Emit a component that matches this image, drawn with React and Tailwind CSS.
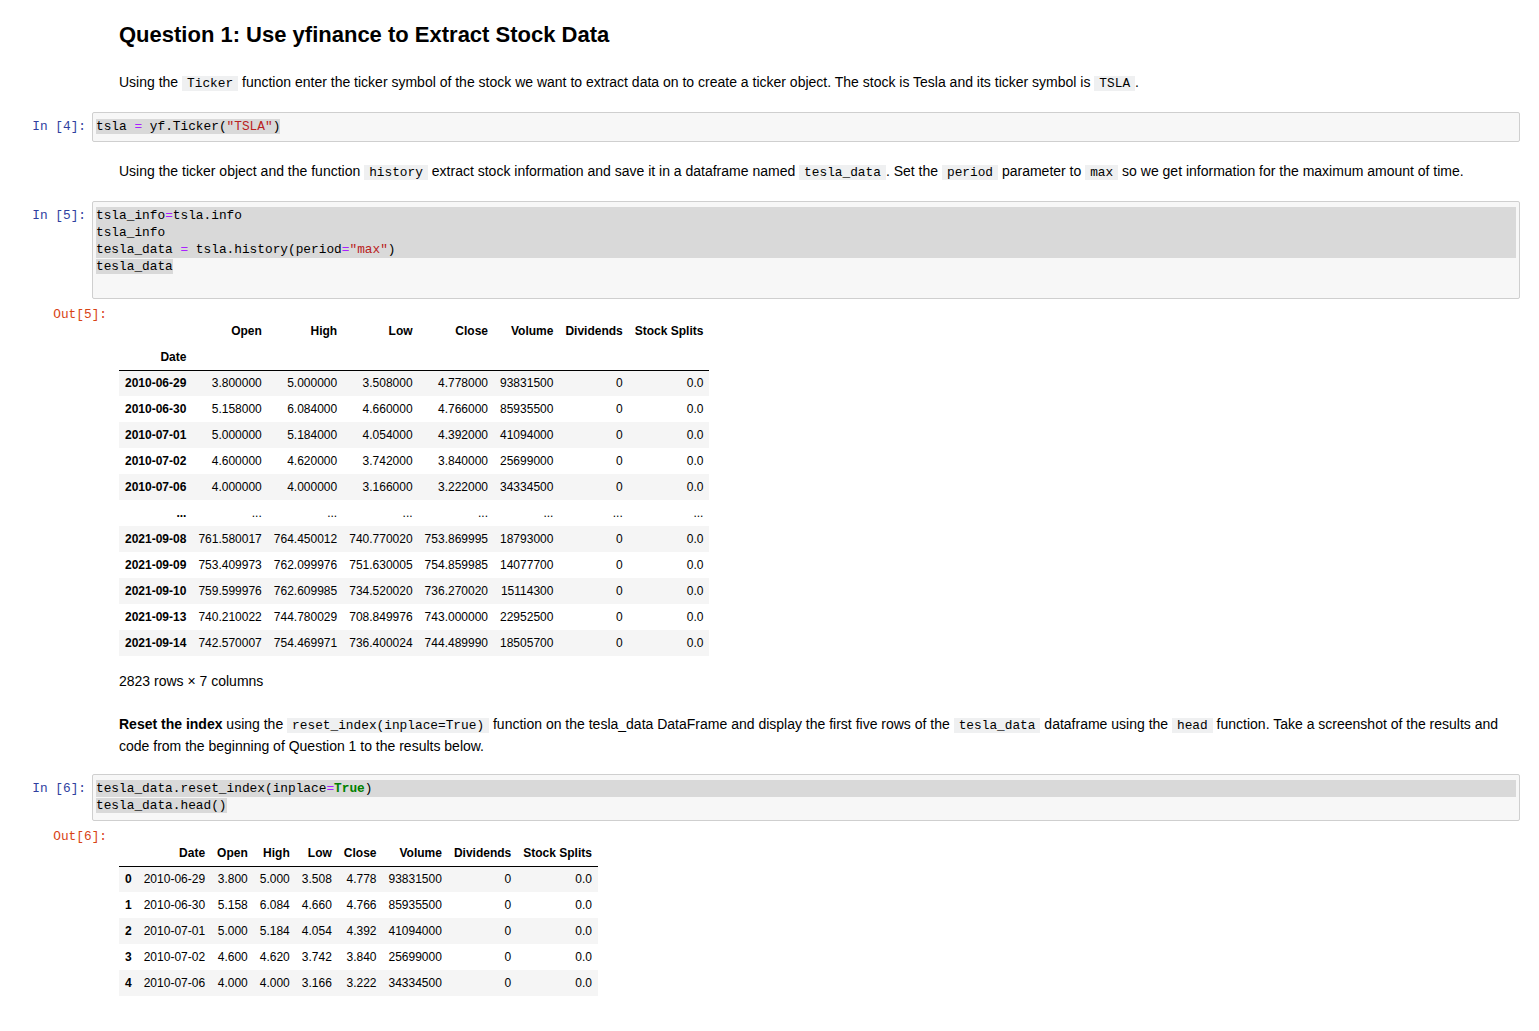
import React from 'react'

const mono = "font-['Liberation_Mono',monospace] text-[12.8px]"

const big = {
  cols: ['Open', 'High', 'Low', 'Close', 'Volume', 'Dividends', 'Stock Splits'],
  rows: [
    ['2010-06-29', '3.800000', '5.000000', '3.508000', '4.778000', '93831500', '0', '0.0'],
    ['2010-06-30', '5.158000', '6.084000', '4.660000', '4.766000', '85935500', '0', '0.0'],
    ['2010-07-01', '5.000000', '5.184000', '4.054000', '4.392000', '41094000', '0', '0.0'],
    ['2010-07-02', '4.600000', '4.620000', '3.742000', '3.840000', '25699000', '0', '0.0'],
    ['2010-07-06', '4.000000', '4.000000', '3.166000', '3.222000', '34334500', '0', '0.0'],
    ['...', '...', '...', '...', '...', '...', '...', '...'],
    ['2021-09-08', '761.580017', '764.450012', '740.770020', '753.869995', '18793000', '0', '0.0'],
    ['2021-09-09', '753.409973', '762.099976', '751.630005', '754.859985', '14077700', '0', '0.0'],
    ['2021-09-10', '759.599976', '762.609985', '734.520020', '736.270020', '15114300', '0', '0.0'],
    ['2021-09-13', '740.210022', '744.780029', '708.849976', '743.000000', '22952500', '0', '0.0'],
    ['2021-09-14', '742.570007', '754.469971', '736.400024', '744.489990', '18505700', '0', '0.0'],
  ],
}

const head = {
  cols: ['Date', 'Open', 'High', 'Low', 'Close', 'Volume', 'Dividends', 'Stock Splits'],
  rows: [
    ['0', '2010-06-29', '3.800', '5.000', '3.508', '4.778', '93831500', '0', '0.0'],
    ['1', '2010-06-30', '5.158', '6.084', '4.660', '4.766', '85935500', '0', '0.0'],
    ['2', '2010-07-01', '5.000', '5.184', '4.054', '4.392', '41094000', '0', '0.0'],
    ['3', '2010-07-02', '4.600', '4.620', '3.742', '3.840', '25699000', '0', '0.0'],
    ['4', '2010-07-06', '4.000', '4.000', '3.166', '3.222', '34334500', '0', '0.0'],
  ],
}

function Code({ children }) {
  return (
    <code className={`${mono} bg-[#eff0f1] px-[5px] text-black`}>{children}</code>
  )
}

const Op = ({ children }) => <span className="text-[#aa22ff]">{children}</span>
const Str = ({ children }) => <span className="text-[#ba2121]">{children}</span>
const Kw = ({ children }) => <span className="font-bold text-[#008000]">{children}</span>

function Markdown({ className = '', children }) {
  return <div className={`pl-[119px] ${className}`}>{children}</div>
}

function InCell({ n, className = '', children }) {
  return (
    <div className={`flex ${className}`}>
      <div className={`${mono} w-[92px] shrink-0 pr-[6px] pt-[6px] text-right leading-[17px] text-[#303f9f]`}>
        In [{n}]:
      </div>
      <div className={`${mono} flex-1 rounded-[2px] border border-[#cfcfcf] bg-[#f7f7f7] px-[3px] pt-[5px] pb-[6px] leading-[17px] whitespace-pre`}>
        {children}
      </div>
    </div>
  )
}

// line that is selected to the end of the row
const Full = ({ children }) => <div className="bg-[#d9d9d9]">{children}</div>
// line that is selected up to the end of its text
const Part = ({ children }) => (
  <div>
    <span className="bg-[#d9d9d9]">{children}</span>
  </div>
)

function OutRow({ n, className = '', children }) {
  return (
    <div className={`flex ${className}`}>
      <div className={`${mono} w-[107px] shrink-0 text-right leading-[17px] text-[#d84315]`}>Out[{n}]:</div>
      <div className="ml-[12px] pt-[12px]">{children}</div>
    </div>
  )
}

const cell = 'h-[26px] px-[6px] py-0 text-right align-middle whitespace-nowrap'

function BigTable() {
  return (
    <table className="border-collapse text-[12px] text-black">
      <thead>
        <tr>
          <th className={cell}></th>
          {big.cols.map((c) => (
            <th key={c} className={`${cell} font-bold`}>{c}</th>
          ))}
        </tr>
        <tr>
          <th className={`${cell} font-bold border-b border-black`}>Date</th>
          {big.cols.map((c) => (
            <th key={c} className={`${cell} border-b border-black`}></th>
          ))}
        </tr>
      </thead>
      <tbody>
        {big.rows.map((r, i) => (
          <tr key={i} className={i % 2 === 0 ? 'bg-[#f5f5f5]' : 'bg-white'}>
            <th className={`${cell} font-bold`}>{r[0]}</th>
            {r.slice(1).map((v, j) => (
              <td key={j} className={cell}>{v}</td>
            ))}
          </tr>
        ))}
      </tbody>
    </table>
  )
}

function HeadTable() {
  return (
    <table className="border-collapse text-[12px] text-black">
      <thead>
        <tr>
          <th className={`${cell} border-b border-black`}></th>
          {head.cols.map((c) => (
            <th key={c} className={`${cell} font-bold border-b border-black`}>{c}</th>
          ))}
        </tr>
      </thead>
      <tbody>
        {head.rows.map((r, i) => (
          <tr key={i} className={i % 2 === 0 ? 'bg-[#f5f5f5]' : 'bg-white'}>
            <th className={`${cell} font-bold`}>{r[0]}</th>
            {r.slice(1).map((v, j) => (
              <td key={j} className={cell}>{v}</td>
            ))}
          </tr>
        ))}
      </tbody>
    </table>
  )
}

export default function App() {
  return (
    <div className="min-h-screen bg-white pr-[19px] pb-[30px] font-['Liberation_Sans',Arial,sans-serif] text-[14px] text-black">
      {/* Heading */}
      <Markdown className="pt-[22px]">
        <h2 className="text-[22px] font-bold leading-[25px]">Question 1: Use yfinance to Extract Stock Data</h2>
      </Markdown>

      <Markdown className="mt-[25px] leading-[21px]">
        Using the <Code>Ticker</Code> function enter the ticker symbol of the stock we want to extract data on to
        create a ticker object. The stock is Tesla and its ticker symbol is <Code>TSLA</Code>.
      </Markdown>

      <InCell n={4} className="mt-[18px]">
        <Part>
          tsla <Op>=</Op> yf.Ticker(<Str>"TSLA"</Str>)
        </Part>
      </InCell>

      <Markdown className="mt-[19px] leading-[21px]">
        Using the ticker object and the function <Code>history</Code> extract stock information and save it in a
        dataframe named <Code>tesla_data</Code>. Set the <Code>period</Code> parameter to <Code>max</Code> so we get
        information for the maximum amount of time.
      </Markdown>

      <InCell n={5} className="mt-[18px]">
        <Full>
          tsla_info<Op>=</Op>tsla.info
        </Full>
        <Full>tsla_info</Full>
        <Full>
          tesla_data <Op>=</Op> tsla.history(period<Op>=</Op>
          <Str>"max"</Str>)
        </Full>
        <Part>tesla_data</Part>
        <div>{' '}</div>
      </InCell>

      <OutRow n={5} className="mt-[7px]">
        <BigTable />
        <p className="mt-[15px] leading-[20px]">2823 rows × 7 columns</p>
      </OutRow>

      <Markdown className="mt-[23px] leading-[21px]">
        <b>Reset the index</b> using the <Code>reset_index(inplace=True)</Code> function on the tesla_data DataFrame
        and display the first five rows of the <Code>tesla_data</Code> dataframe using the <Code>head</Code> function.
        Take a screenshot of the results and code from the beginning of Question 1 to the results below.
      </Markdown>

      <InCell n={6} className="mt-[17px]">
        <Full>
          tesla_data.reset_index(inplace<Op>=</Op>
          <Kw>True</Kw>)
        </Full>
        <Part>tesla_data.head()</Part>
      </InCell>

      <OutRow n={6} className="mt-[7px]">
        <HeadTable />
      </OutRow>
    </div>
  )
}
